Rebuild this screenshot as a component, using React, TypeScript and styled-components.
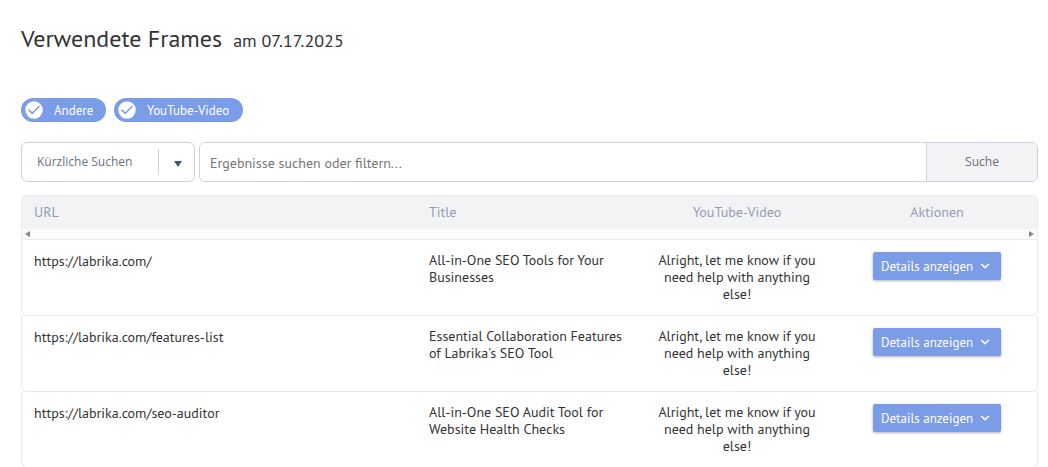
import React from "react";
import styled, { createGlobalStyle } from "styled-components";

const GlobalStyle = createGlobalStyle`
  *, *::before, *::after { box-sizing: border-box; }
  body {
    margin: 0;
    background: #fff;
    color: #333;
    font-family: "PT Sans", "Noto Sans", sans-serif;
    font-size: 14px;
    line-height: 17px;
  }
`;

const Page = styled.main`
  padding: 24px 10px 0 21px;
`;

const Heading = styled.h1`
  display: flex;
  align-items: baseline;
  gap: 11px;
  margin: 0 0 44px;
  font-size: 24px;
  font-weight: 400;
  line-height: 30px;
`;

const HeadingDate = styled.span`
  font-size: 18px;
  line-height: 24px;
`;

const Chips = styled.div`
  display: flex;
  gap: 8px;
  margin-bottom: 20px;
`;

const Chip = styled.label<{ $width: number }>`
  position: relative;
  display: flex;
  align-items: center;
  gap: 11px;
  min-width: ${(p) => p.$width}px;
  height: 24px;
  padding: 0 12px 0 4px;
  border-radius: 12px;
  background: #7b9ce6;
  color: #fff;
  font-size: 13px;
  white-space: nowrap;
  cursor: pointer;
`;

const ChipInput = styled.input`
  position: absolute;
  inset: 0;
  margin: 0;
  opacity: 0;
  cursor: pointer;
`;

const ChipIcon = styled.svg`
  flex: none;
  width: 18px;
  height: 18px;
  input:not(:checked) + & path { display: none; }
`;

const SearchBar = styled.form`
  display: flex;
  gap: 4px;
  margin-bottom: 13px;
`;

const SelectBox = styled.div`
  position: relative;
  flex: none;
  width: 174px;
  height: 40px;
`;

const RecentSelect = styled.select`
  appearance: none;
  width: 100%;
  height: 100%;
  padding: 0 40px 2px 15px;
  border: 1px solid #d1d0df;
  border-radius: 6px;
  background: #fff;
  color: #6b7080;
  font-family: "Open Sans", sans-serif;
  font-size: 12px;
`;

const SelectArrow = styled.span`
  position: absolute;
  top: 7px;
  right: 0;
  display: flex;
  align-items: center;
  justify-content: center;
  width: 37px;
  height: 26px;
  padding: 3px 0 0 2px;
  border-left: 1px solid #d1d0df;
  pointer-events: none;
`;

const SearchGroup = styled.div`
  display: flex;
  flex: 1;
  height: 40px;
  border: 1px solid #d1d0df;
  border-radius: 6px;
  overflow: hidden;
`;

const SearchInput = styled.input`
  flex: 1;
  min-width: 0;
  padding: 2px 10px 0;
  border: 0;
  outline: 0;
  background: #fff;
  font: inherit;
  &::placeholder { color: #757575; opacity: 1; }
`;

const SearchButton = styled.button`
  width: 111px;
  padding: 0 0 2px;
  border: 0;
  border-left: 1px solid #d1d0df;
  background: #f2f3f5;
  color: #6b7080;
  font-family: "Open Sans", sans-serif;
  font-size: 12px;
  cursor: pointer;
`;

const Table = styled.table`
  width: 100%;
  table-layout: fixed;
  border-collapse: separate;
  border-spacing: 0;
`;

const Column = styled.col<{ $width?: number }>`
  width: ${(p) => (p.$width ? `${p.$width}px` : "auto")};
`;

const HeadCell = styled.th<{ $center?: boolean }>`
  height: 34px;
  padding: 0 12px;
  border-top: 1px solid #e9eaf3;
  background: #f2f3f5;
  color: #949bb5;
  font-weight: 400;
  text-align: ${(p) => (p.$center ? "center" : "left")};
  &:first-child { border-left: 1px solid #e9eaf3; border-top-left-radius: 6px; }
  &:last-child { border-right: 1px solid #e9eaf3; border-top-right-radius: 6px; }
`;

const ScrollCell = styled.td`
  padding: 0;
  border: 1px solid #e9eaf3;
  border-top: 0;
  background: #fcfcfc;
`;

const ScrollTrack = styled.div`
  display: flex;
  align-items: center;
  justify-content: space-between;
  height: 10px;
  padding: 0 3px;
`;

const Cell = styled.td<{ $center?: boolean }>`
  padding: 12px;
  border-bottom: 1px solid #e9eaf3;
  vertical-align: top;
  text-align: ${(p) => (p.$center ? "center" : "left")};
  &:first-child { border-left: 1px solid #e9eaf3; border-bottom-left-radius: 6px; }
  &:last-child { border-right: 1px solid #e9eaf3; border-bottom-right-radius: 6px; }
`;

const UrlLink = styled.a`
  display: block;
  color: inherit;
  line-height: 19px;
  text-decoration: none;
`;

const DetailsButton = styled.button`
  display: inline-flex;
  align-items: center;
  justify-content: space-between;
  width: 128px;
  height: 28px;
  padding: 0 11px 0 8px;
  border: 0;
  border-radius: 2px;
  background: #7b9ce6;
  box-shadow: 0 1px 3px rgba(0, 0, 0, 0.3);
  color: #fff;
  font-family: inherit;
  font-size: 13px;
  white-space: nowrap;
  cursor: pointer;
`;

const filters = [
  { label: "Andere", width: 85 },
  { label: "YouTube-Video", width: 129 },
];

const rows = [
  { url: "https://labrika.com/", title: "All-in-One SEO Tools for Your Businesses" },
  { url: "https://labrika.com/features-list", title: "Essential Collaboration Features of Labrika's SEO Tool" },
  { url: "https://labrika.com/seo-auditor", title: "All-in-One SEO Audit Tool for Website Health Checks" },
];

export default function App() {
  return (
    <>
      <GlobalStyle />
      <Page>
        <Heading>
          Verwendete Frames <HeadingDate>am 07.17.2025</HeadingDate>
        </Heading>
        <Chips>
          {filters.map((f) => (
            <Chip key={f.label} $width={f.width}>
              <ChipInput type="checkbox" defaultChecked />
              <ChipIcon viewBox="0 0 18 18" aria-hidden="true">
                <circle cx="9" cy="9" r="8.7" fill="#fff" />
                <path d="M3.6 8.8l3.6 3.6L14.4 5" fill="none" stroke="#7b9ce6" strokeWidth="1.5" />
              </ChipIcon>
              {f.label}
            </Chip>
          ))}
        </Chips>
        <SearchBar onSubmit={(e) => e.preventDefault()}>
          <SelectBox>
            <RecentSelect aria-label="Kürzliche Suchen">
              <option>Kürzliche Suchen</option>
            </RecentSelect>
            <SelectArrow>
              <svg width="8" height="6" viewBox="0 0 8 6" aria-hidden="true">
                <path d="M0 0h8L4 6z" fill="#4b5378" />
              </svg>
            </SelectArrow>
          </SelectBox>
          <SearchGroup>
            <SearchInput
              type="text"
              aria-label="Ergebnisse suchen oder filtern"
              placeholder="Ergebnisse suchen oder filtern..."
            />
            <SearchButton type="submit">Suche</SearchButton>
          </SearchGroup>
        </SearchBar>
        <Table>
          <colgroup>
            <Column />
            <Column $width={220} />
            <Column $width={200} />
            <Column $width={201} />
          </colgroup>
          <thead>
            <tr>
              <HeadCell scope="col">URL</HeadCell>
              <HeadCell scope="col">Title</HeadCell>
              <HeadCell scope="col" $center>YouTube-Video</HeadCell>
              <HeadCell scope="col" $center>Aktionen</HeadCell>
            </tr>
            <tr>
              <ScrollCell colSpan={4}>
                <ScrollTrack>
                  <svg width="5" height="6" viewBox="0 0 5 6" aria-hidden="true">
                    <path d="M5 0v6L0 3z" fill="#858585" />
                  </svg>
                  <svg width="5" height="6" viewBox="0 0 5 6" aria-hidden="true">
                    <path d="M0 0v6l5-3z" fill="#858585" />
                  </svg>
                </ScrollTrack>
              </ScrollCell>
            </tr>
          </thead>
          <tbody>
            {rows.map((row) => (
              <tr key={row.url}>
                <Cell>
                  <UrlLink href={row.url}>{row.url}</UrlLink>
                </Cell>
                <Cell>{row.title}</Cell>
                <Cell $center>Alright, let me know if you need help with anything else!</Cell>
                <Cell $center>
                  <DetailsButton type="button">
                    Details anzeigen
                    <svg width="10" height="6" viewBox="0 0 10 6" aria-hidden="true">
                      <path d="M1.2 1L5 4.6 8.8 1" fill="none" stroke="#fff" strokeWidth="1.6" />
                    </svg>
                  </DetailsButton>
                </Cell>
              </tr>
            ))}
          </tbody>
        </Table>
      </Page>
    </>
  );
}
